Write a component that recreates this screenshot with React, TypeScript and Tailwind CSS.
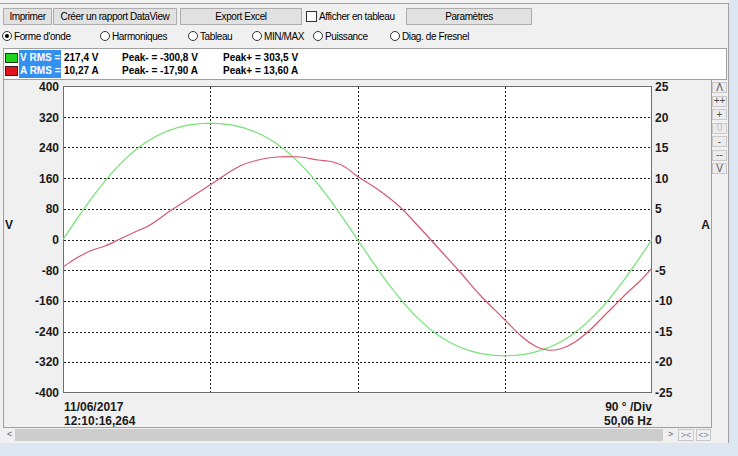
import React from 'react';

const W = 589;
const H = 307;

// green = voltage, slightly flattened sine
const greenPts = Array.from({ length: 145 }, (_, i) => {
  const t = (i / 144) * Math.PI * 2;
  const v = 318 * Math.sin(t) + 15 * Math.sin(3 * t);
  return `${((i / 144) * W).toFixed(1)},${(H / 2 - v * (H / 2 / 400)).toFixed(1)}`;
}).join(' ');

// red = current, traced from the capture (page coords)
const redRaw: [number, number][] = [
  [63, 267], [75, 259], [90, 251], [105, 246], [120, 239], [135, 232], [150, 225],
  [170, 211], [190, 198], [210, 185], [225, 175], [240, 166], [258, 160], [277, 157],
  [300, 157], [318, 160], [333, 162], [345, 167], [357, 176], [380, 191], [400, 207],
  [420, 228], [440, 250], [460, 272], [480, 295], [503, 318], [520, 335], [535, 346],
  [547, 350], [560, 349], [575, 342], [590, 330], [605, 315], [627, 293], [640, 281],
  [652, 268],
];

// catmull-rom -> bezier so the trace is smooth
const smooth = (pts: [number, number][]) => {
  const p = pts.map(([x, y]) => [x - 63, y - 86]);
  let d = `M${p[0][0]},${p[0][1]}`;
  for (let i = 0; i < p.length - 1; i++) {
    const p0 = p[i - 1] || p[i];
    const p1 = p[i];
    const p2 = p[i + 1];
    const p3 = p[i + 2] || p2;
    const c1x = p1[0] + (p2[0] - p0[0]) / 6;
    const c1y = p1[1] + (p2[1] - p0[1]) / 6;
    const c2x = p2[0] - (p3[0] - p1[0]) / 6;
    const c2y = p2[1] - (p3[1] - p1[1]) / 6;
    d += ` C${c1x.toFixed(1)},${c1y.toFixed(1)} ${c2x.toFixed(1)},${c2y.toFixed(1)} ${p2[0]},${p2[1]}`;
  }
  return d;
};
const redPath = smooth(redRaw);

const leftLabels = ['400', '320', '240', '160', '80', '0', '-80', '-160', '-240', '-320', '-400'];
const rightLabels = ['25', '20', '15', '10', '5', '0', '-5', '-10', '-15', '-20', '-25'];

const ToolBtn = ({ className, children }: { className: string; children: React.ReactNode }) => (
  <div
    className={`h-[17px] flex items-center justify-center bg-[#e1e1e1] border border-[#adadad] ${className}`}
  >
    {children}
  </div>
);

const Radio = ({ label, checked, className }: { label: string; checked?: boolean; className: string }) => (
  <div className={`flex items-center ${className}`}>
    <div className="w-[10px] h-[10px] rounded-full border border-[#333] bg-white flex items-center justify-center">
      {checked && <div className="w-[4px] h-[4px] rounded-full bg-black" />}
    </div>
    <span className="ml-[2px]">{label}</span>
  </div>
);

const ZoomBtn = ({ children, dim }: { children: React.ReactNode; dim?: boolean }) => (
  <div
    className={`w-[15px] h-[11px] flex items-center justify-center border border-[#c8c8c8] bg-[#ececec] text-[10px] leading-none ${
      dim ? 'text-[#c0c0c0]' : 'text-[#505050]'
    }`}
  >
    {children}
  </div>
);

const App: React.FC = () => {
  return (
    <div className="w-[738px] h-[456px] bg-[#dce7f2] overflow-hidden font-['Liberation_Sans',Arial,sans-serif] text-black">
      <div className="h-[3px] w-[729px] bg-[#f3f3f3]" />
      <div className="w-[729px] h-[440px] bg-[#f0f0f0] border-t border-r border-[#a0a0a0] flex flex-col">
        {/* toolbar */}
        <div className="flex items-center pl-[3px] pt-[4px] text-[10px] tracking-[-0.4px]">
          <ToolBtn className="w-[49px]">Imprimer</ToolBtn>
          <ToolBtn className="w-[124px] ml-[1px]">Créer un rapport DataView</ToolBtn>
          <ToolBtn className="w-[122px] ml-[3px]">Export Excel</ToolBtn>
          <div className="ml-[4px] w-[11px] h-[11px] border border-[#333] bg-white" />
          <span className="ml-[2px] w-[87px]">Afficher en tableau</span>
          <ToolBtn className="w-[126px]">Paramètres</ToolBtn>
        </div>

        {/* view selector */}
        <div className="h-[22px] flex items-center pl-[2px] text-[10px] tracking-[-0.4px]">
          <Radio label="Forme d'onde" checked className="w-[98px]" />
          <Radio label="Harmoniques" className="w-[88px]" />
          <Radio label="Tableau" className="w-[64px]" />
          <Radio label="MIN/MAX" className="w-[61px]" />
          <Radio label="Puissance" className="w-[77px]" />
          <Radio label="Diag. de Fresnel" className="w-[100px]" />
        </div>

        {/* measurements */}
        <div className="mt-[1px] ml-[3px] w-[724px] h-[32px] bg-white border border-[#a0a0a0] flex text-[10px] font-bold leading-[13px]">
          <div className="flex flex-col gap-[3px] pt-[4px] pl-[1px]">
            <div className="w-[13px] h-[10px] bg-[#1ed41e] border border-[#1a3a1a]" />
            <div className="w-[13px] h-[10px] bg-[#e0141c] border border-[#3a1a1a]" />
          </div>
          <div className="mt-[1px] h-[28px] w-[42px] ml-[1px] bg-[#3390f0] text-white pl-[1px] pt-[1px]">
            <div>V RMS =</div>
            <div>A RMS =</div>
          </div>
          <div className="ml-[3px] w-[58px] pt-[2px]">
            <div>217,4 V</div>
            <div>10,27 A</div>
          </div>
          <div className="w-[101px] pt-[2px]">
            <div>Peak- = -300,8 V</div>
            <div>Peak- = -17,90 A</div>
          </div>
          <div className="pt-[2px]">
            <div>Peak+ = 303,5 V</div>
            <div>Peak+ = 13,60 A</div>
          </div>
        </div>

        {/* chart + side buttons */}
        <div className="flex">
          <div className="w-[712px] flex flex-col">
            <div className="ml-[3px] h-[348px] border-l border-r border-b border-[#a0a0a0] flex text-[12px] font-bold leading-[14px] text-[#1a1a1a]">
              <div className="w-[59px] flex">
                <div className="mt-[138px] ml-[1px] h-[14px]">V</div>
                <div className="flex-1 h-[320px] flex flex-col justify-between items-end pr-[4px]">
                  {leftLabels.map((l) => (
                    <div key={l} className="h-[14px]">{l}</div>
                  ))}
                </div>
              </div>

              <div className="w-[589px] pt-[6px]">
                <svg width={W} height={H} className="block">
                  <rect x={0.5} y={0.5} width={W - 1} height={H - 1} fill="#fff" stroke="#6e6e6e" />
                  {Array.from({ length: 9 }, (_, i) => {
                    const y = Math.round(((i + 1) * H) / 10) + 0.5;
                    return (
                      <line key={`h${i}`} x1={1} x2={W - 1} y1={y} y2={y} stroke="#222" strokeDasharray="2 2" />
                    );
                  })}
                  {[1, 2, 3].map((j) => {
                    const x = Math.round((j * W) / 4) + 0.5;
                    return <line key={`v${j}`} x1={x} x2={x} y1={1} y2={H - 1} stroke="#222" strokeDasharray="2 2" />;
                  })}
                  <polyline points={greenPts} fill="none" stroke="#74e274" strokeWidth={1.2} />
                  <path d={redPath} fill="none" stroke="#d6566e" strokeWidth={1.2} />
                </svg>
                <div className="mt-[7px] flex justify-between pl-[1px]">
                  <div>
                    <div>11/06/2017</div>
                    <div>12:10:16,264</div>
                  </div>
                  <div className="text-right">
                    <div>90 ° /Div</div>
                    <div>50,06 Hz</div>
                  </div>
                </div>
              </div>

              <div className="flex-1 flex pl-[3px]">
                <div className="h-[320px] flex flex-col justify-between">
                  {rightLabels.map((l) => (
                    <div key={l} className="h-[14px]">{l}</div>
                  ))}
                </div>
                <div className="ml-auto mr-[1px] mt-[138px] h-[14px]">A</div>
              </div>
            </div>

            {/* scroll bar */}
            <div className="h-[14px] flex items-center text-[9px] text-[#606060]">
              <span className="ml-[7px] w-[8px]">&lt;</span>
              <div className="w-[648px] h-[12px] bg-[#cdcdcd]" />
              <span className="ml-[5px] w-[10px]">&gt;</span>
              <div className="w-[16px] h-[12px] border border-[#c8c8c8] flex items-center justify-center text-[#7d8ca3] leading-none">
                &gt;&lt;
              </div>
              <div className="ml-[2px] w-[15px] h-[12px] border border-[#c8c8c8] flex items-center justify-center text-[#7d8ca3] leading-none">
                &lt;&gt;
              </div>
            </div>
          </div>

          <div className="pt-[2px] flex flex-col gap-[2.5px]">
            <ZoomBtn>Λ</ZoomBtn>
            <ZoomBtn>++</ZoomBtn>
            <ZoomBtn>+</ZoomBtn>
            <ZoomBtn dim>0</ZoomBtn>
            <ZoomBtn>-</ZoomBtn>
            <ZoomBtn>--</ZoomBtn>
            <ZoomBtn>V</ZoomBtn>
          </div>
        </div>
      </div>
    </div>
  );
};

export default App;
